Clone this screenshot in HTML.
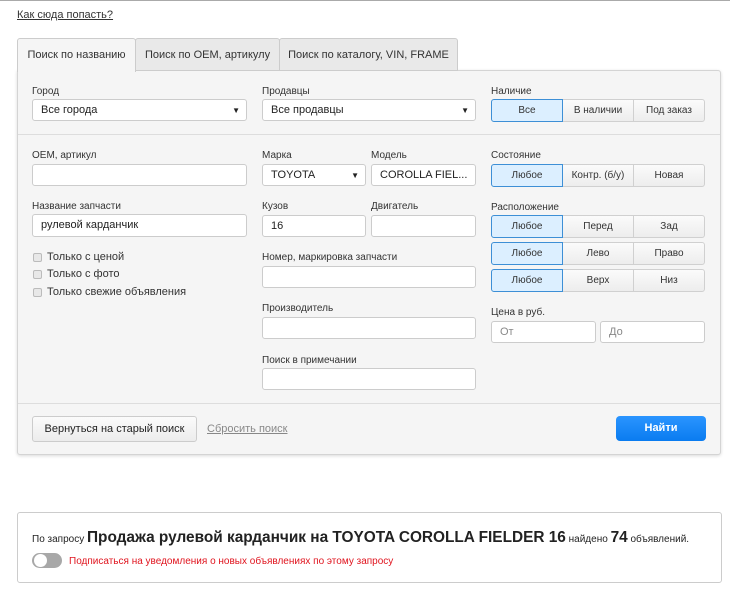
<!DOCTYPE html>
<html><head><meta charset="utf-8">
<style>
*{box-sizing:border-box;margin:0;padding:0}
body{width:730px;height:592px;background:#fff;font-family:"Liberation Sans",Arial,sans-serif;position:relative;overflow:hidden;color:#333}
.a{position:absolute}
.lbl{position:absolute;font-size:10px;color:#333;margin-top:2px}
.inp{position:absolute;background:#fff;border:1px solid #ccc;border-radius:3px;height:22px;font-size:11px;line-height:21px;padding-left:8px;color:#222}
.inp .ar{position:absolute;right:6px;top:0;font-size:8px}
.seg{position:absolute;display:flex;height:23px}
.seg div{flex:1;border:1px solid #d0d0d0;background:linear-gradient(#fbfbfb,#ededed);font-size:10px;text-align:center;line-height:22px;margin-left:-1px;color:#333}
.seg div:first-child{margin-left:0;border-radius:3px 0 0 3px}
.seg div:last-child{border-radius:0 3px 3px 0}
.seg div.on{background:#dcefff;border-color:#3d8fd6;position:relative;z-index:1}
.tab{position:absolute;top:38px;height:33px;font-size:11px;line-height:32px;text-align:center;border:1px solid #ccc;background:#e9e9e9;border-radius:3px 3px 0 0}
.cb{position:absolute;width:9px;height:9px;border:1px solid #bbb;background:#e8e8e8;border-radius:2px}
.ct{position:absolute;font-size:11px;color:#333}
</style></head><body>
<div class="a" style="left:0;top:0;width:730px;height:1px;background:#aaa"></div>
<div class="a" style="left:17px;top:9px;font-size:11px;color:#333;text-decoration:underline">Как сюда попасть?</div>

<div class="a" style="left:17px;top:70px;width:704px;height:385px;background:#f5f5f5;border:1px solid #d4d4d4;border-radius:0 3px 3px 3px;box-shadow:0 1px 3px rgba(0,0,0,.15)"></div>
<div class="tab" style="left:17px;width:119px;background:#f5f5f5;border-bottom:none;height:34px">Поиск по названию</div>
<div class="tab" style="left:135px;width:145px">Поиск по OEM, артикулу</div>
<div class="tab" style="left:279px;width:179px">Поиск по каталогу, VIN, FRAME</div>

<div class="lbl" style="left:32px;top:84px">Город</div>
<div class="inp" style="left:32px;top:99px;width:215px">Все города<span class="ar">▼</span></div>
<div class="lbl" style="left:262px;top:84px">Продавцы</div>
<div class="inp" style="left:262px;top:99px;width:214px">Все продавцы<span class="ar">▼</span></div>
<div class="lbl" style="left:491px;top:84px">Наличие</div>
<div class="seg" style="left:491px;top:99px;width:214px"><div class="on">Все</div><div>В наличии</div><div>Под заказ</div></div>
<div class="a" style="left:18px;top:134px;width:702px;height:1px;background:#ddd"></div>

<div class="lbl" style="left:32px;top:148px">OEM, артикул</div>
<div class="inp" style="left:32px;top:164px;width:215px"></div>
<div class="lbl" style="left:262px;top:148px">Марка</div>
<div class="inp" style="left:262px;top:164px;width:104px">TOYOTA<span class="ar">▼</span></div>
<div class="lbl" style="left:371px;top:148px">Модель</div>
<div class="inp" style="left:371px;top:164px;width:105px">COROLLA FIEL...</div>
<div class="lbl" style="left:491px;top:148px">Состояние</div>
<div class="seg" style="left:491px;top:164px;width:214px"><div class="on">Любое</div><div>Контр. (б/у)</div><div>Новая</div></div>

<div class="lbl" style="left:32px;top:199px">Название запчасти</div>
<div class="inp" style="left:32px;top:214px;width:215px;height:23px">рулевой карданчик</div>
<div class="lbl" style="left:262px;top:199px">Кузов</div>
<div class="inp" style="left:262px;top:215px;width:104px">16</div>
<div class="lbl" style="left:371px;top:199px">Двигатель</div>
<div class="inp" style="left:371px;top:215px;width:105px"></div>
<div class="lbl" style="left:491px;top:200px">Расположение</div>
<div class="seg" style="left:491px;top:215px;width:214px"><div class="on">Любое</div><div>Перед</div><div>Зад</div></div>
<div class="seg" style="left:491px;top:242px;width:214px"><div class="on">Любое</div><div>Лево</div><div>Право</div></div>
<div class="seg" style="left:491px;top:269px;width:214px"><div class="on">Любое</div><div>Верх</div><div>Низ</div></div>

<div class="cb" style="left:33px;top:253px"></div><div class="ct" style="left:47px;top:251px">Только с ценой</div>
<div class="cb" style="left:33px;top:270px"></div><div class="ct" style="left:47px;top:268px">Только с фото</div>
<div class="cb" style="left:33px;top:288px"></div><div class="ct" style="left:47px;top:286px">Только свежие объявления</div>

<div class="lbl" style="left:262px;top:250px">Номер, маркировка запчасти</div>
<div class="inp" style="left:262px;top:266px;width:214px"></div>
<div class="lbl" style="left:262px;top:301px">Производитель</div>
<div class="inp" style="left:262px;top:317px;width:214px"></div>
<div class="lbl" style="left:262px;top:353px">Поиск в примечании</div>
<div class="inp" style="left:262px;top:368px;width:214px"></div>
<div class="lbl" style="left:491px;top:305px">Цена в руб.</div>
<div class="inp" style="left:491px;top:321px;width:105px;color:#888">От</div>
<div class="inp" style="left:600px;top:321px;width:105px;color:#888">До</div>

<div class="a" style="left:18px;top:403px;width:702px;height:1px;background:#ddd"></div>
<div class="a" style="left:32px;top:416px;width:165px;height:26px;border:1px solid #ccc;border-radius:3px;background:linear-gradient(#fbfbfb,#ececec);font-size:11px;text-align:center;line-height:25px;color:#222">Вернуться на старый поиск</div>
<div class="a" style="left:207px;top:423px;font-size:11px;color:#888;text-decoration:underline">Сбросить поиск</div>
<div class="a" style="left:616px;top:416px;width:90px;height:25px;border-radius:4px;background:linear-gradient(#2a95ff,#0a7cf0);color:#fff;font-size:11px;font-weight:bold;text-align:center;line-height:25px">Найти</div>

<div class="a" style="left:17px;top:512px;width:705px;height:71px;border:1px solid #ccc;border-radius:3px"></div>
<div class="a" style="left:32px;top:529px;white-space:nowrap;color:#222;font-size:10px">По запросу <b style="font-size:15.4px">Продажа рулевой карданчик на TOYOTA COROLLA FIELDER 16</b> найдено <b style="font-size:15.4px">74</b> объявлений.</div>
<div class="a" style="left:32px;top:553px;width:30px;height:15px;border-radius:8px;background:#a8a8a8"></div>
<div class="a" style="left:34px;top:554px;width:13px;height:13px;border-radius:50%;background:#fff"></div>
<div class="a" style="left:69px;top:556px;font-size:10px;color:#e0141e">Подписаться на уведомления о новых объявлениях по этому запросу</div>
</body></html>
